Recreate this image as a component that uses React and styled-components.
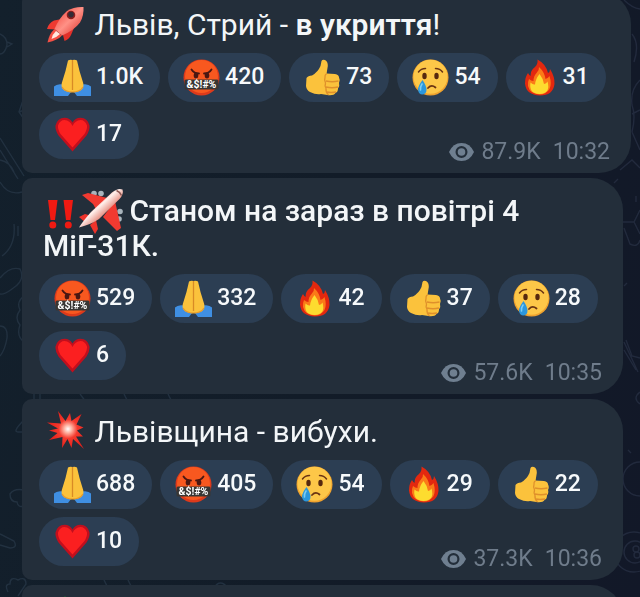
import React from "react";
import styled, { createGlobalStyle } from "styled-components";

const GlobalStyle = createGlobalStyle`
  * {
    box-sizing: border-box;
  }
  body {
    margin: 0;
    background: linear-gradient(100deg, #13202c 0%, #121c28 50%, #121828 100%);
    font-family: Roboto, "Liberation Sans", sans-serif;
  }
`

const Wallpaper = styled.svg`
  position: fixed;
  top: 0;
  ${(props) => (props.$side === "right" ? "right: 0;" : "left: 0;")}
  fill: none;
  stroke: ${(props) => (props.$side === "right" ? "#222a3d" : "#223140")};
  stroke-width: 1.4;
`

const Feed = styled.main`
  position: relative;
  display: flex;
  flex-direction: column;
  gap: 5px;
  height: 100vh;
  overflow: hidden;
  padding-left: 22px;
`

const Bubble = styled.article`
  flex: none;
  margin-right: ${(props) => (props.$wide ? 9 : 17)}px;
  padding: 15px 21px 9px 17px;
  background-color: #232e3a;
  border-radius: 10px 32px 32px 10px;

  /* the feed is scrolled a little past the top of the first post */
  &:first-child {
    margin-top: -8px;
  }
`

const Title = styled.p`
  margin: 0 0 11px;
  padding-left: 4px;
  color: #f3f6f8;
  font-size: 30px;
  line-height: 35px;
  font-weight: ${(props) => (props.$bold ? 500 : 400)};
`

const Strong = styled.strong`
  font-weight: 600;
`

const TitleIcon = styled.svg`
  display: inline-block;
  height: 44px;
  margin: -10px 0;
  vertical-align: -2px;
  overflow: visible;
`

const Reactions = styled.div`
  display: flex;
  flex-wrap: wrap;
  align-items: flex-start;
  gap: 8px;
`

const Reaction = styled.button`
  display: flex;
  align-items: center;
  gap: 5px;
  height: 49px;
  padding: 0 17px 0 15px;
  border: 0;
  border-radius: 25px;
  background-color: #2c3e53;
  color: #f6f9fb;
  font: 500 23px/28px Roboto, "Liberation Sans", sans-serif;
  cursor: pointer;
`

const Count = styled.span`
  padding-bottom: 1px;
`

const Emoji = styled.svg`
  width: 37px;
  height: 37px;
  overflow: visible;
`

const Meta = styled.div`
  display: flex;
  align-items: center;
  gap: 7px;
  margin-left: auto;
  padding-top: 29px;
  color: #6f7c8b;
  font-size: 23px;
  line-height: 25px;
`

const Time = styled.time`
  margin-left: 5px;
`

const Pray = () => (
  <Emoji viewBox="0 0 37 37" aria-hidden="true">
    <path d="M0 27.500Q2 25.500 6 25.200L10 25.500L17 33L14 37H0Z" fill="#3f8fe3" />
    <path d="M37 27.500Q35 25.500 31 25.200L27 25.500L20 33L23 37H37Z" fill="#3f8fe3" />
    <path d="M14 1.500Q16 .2 18.500 1Q21 .2 23 1.500L25.500 12L29.200 24Q30.500 29 26.500 31.500Q22 34 18.500 33Q15 34 10.500 31.500Q6.500 29 7.800 24L11.500 12Z" fill="#fbc23c" />
    <path d="M18.500 1V31" stroke="#d98a25" strokeWidth="1.300" />
    <path d="M8 28Q11 33 18.500 33Q26 33 29 28" fill="none" stroke="#e59a2c" strokeWidth="1.200" />
  </Emoji>
)

const Swear = () => (
  <Emoji viewBox="0 0 37 37" aria-hidden="true">
    <circle cx="18.500" cy="18.500" r="18" fill="#dd3a1b" />
    <circle cx="18.500" cy="17.500" r="16.500" fill="#f8581f" />
    <path d="M8.500 10.500Q11 14.500 16 14.500M28.500 10.500Q26 14.500 21 14.500" fill="none" stroke="#4a1712" strokeWidth="1.800" strokeLinecap="round" />
    <ellipse cx="13" cy="16.500" rx="2.300" ry="2.900" fill="#4a1712" />
    <ellipse cx="24" cy="16.500" rx="2.300" ry="2.900" fill="#4a1712" />
    <rect x="1.500" y="20.500" width="34" height="10" rx="1.500" fill="#383634" />
    <text x="18.500" y="29.300" textAnchor="middle" fill="#fff" fontSize="10.500" fontWeight="700" fontFamily="Roboto, sans-serif">&amp;$!#%</text>
  </Emoji>
)

const Thumb = () => (
  <Emoji viewBox="0 0 37 37" aria-hidden="true">
    <path d="M2.500 19Q4 16.500 8 16.500Q14 13 16.500 7L17.500 2Q18.500 .2 21 1Q24 2.500 23.800 7L22.600 14.500L31 15Q35 15.500 35 18.500Q36.500 21 35 24Q36 27 34 29.500Q34 33 31.500 34Q30 36.500 25 36.200L17 35Q12 36 6 33Q2.500 31 2 27Z" fill="#fbc23c" />
    <path d="M22.600 14.500Q20.500 16 21 18.500Q20 21 21.500 24Q20.500 27 22 29.500Q21.500 33 24.500 36M22 22Q28 23.500 34.500 22M22 28Q28 29.500 34 28M23 33Q27 34 32 33" fill="none" stroke="#df902b" strokeWidth="1.300" />
  </Emoji>
)

const Cry = () => (
  <Emoji viewBox="0 0 37 37" aria-hidden="true">
    <circle cx="18.500" cy="18.500" r="18" fill="#efa22e" />
    <circle cx="18.500" cy="17.800" r="17" fill="#fdc748" />
    <path d="M6.500 13Q9 9.500 13.500 9.500M30.500 13Q28 9.500 23.500 9.500" fill="none" stroke="#6b3413" strokeWidth="1.500" strokeLinecap="round" />
    <ellipse cx="12.500" cy="17" rx="2.200" ry="3.200" fill="#56280e" />
    <ellipse cx="24.500" cy="17" rx="2.200" ry="3.200" fill="#56280e" />
    <path d="M16 29Q19.500 25 23.500 28.500" fill="none" stroke="#6b3413" strokeWidth="1.800" strokeLinecap="round" />
    <path d="M10.500 21Q6 27 6 30.500Q6.500 35.500 10.500 35.500Q14.500 35 14.500 30.500Q14.500 27 10.500 21Z" fill="#2b97dd" />
    <path d="M10 25Q8 28 8.500 31" fill="none" stroke="#7accf5" strokeWidth="1.600" strokeLinecap="round" />
  </Emoji>
)

const Fire = () => (
  <Emoji viewBox="0 0 37 37" aria-hidden="true">
    <path d="M16.500 .5Q25 5 27 14Q29 13 29 10Q34 18 33.500 25Q32 36.500 19 36.500Q5 36 4 24.500Q4 18 7 14Q8 16 9.500 17Q9.500 11 14 8Q17 5 16.500 .5Z" fill="#e3280f" />
    <path d="M18 8Q23.500 13 24.500 20Q27.500 19 28.500 17Q31 25 28.500 30Q25 35.500 18.500 35.500Q9 35 7 27Q6.500 23 8 20Q10 22 12.500 22Q12.500 17 15.500 14Q18.500 11 18 8Z" fill="#fb7a18" />
    <path d="M18.500 15Q22.500 20 23 25Q25.500 24.500 26.500 22.500Q30 34.500 18.500 35Q7.500 34.500 9.500 23.500Q12 26 14 25.500Q14.500 20 18.500 15Z" fill="#fddc2f" />
  </Emoji>
)

const Heart = () => (
  <Emoji viewBox="0 0 37 37" aria-hidden="true">
    <path d="M18.500 35.500L4.500 19.500Q1 14 1.500 9.500Q3.500 2 10.500 1.800Q16 2 18.500 6.500Q21 2 26.500 1.800Q33.500 2 35.500 9.500Q36 14 32.500 19.500Z" fill="#c20f1d" />
    <path d="M18.500 31.500L6.500 18Q3.500 13 4 9.500Q6 4 10.500 4Q16 4.500 18.500 10Q21 4.500 26.500 4Q31 4 33 9.500Q33.500 13 30.500 18Z" fill="#fb1f20" />
  </Emoji>
)

const Rocket = () => (
  <TitleIcon width="44" height="44" viewBox="0 0 44 44" aria-hidden="true">
    <defs>
      <linearGradient id="rocketBody" x1="0" y1="0" x2="1" y2="1">
        <stop offset="0" stopColor="#f0382f" />
        <stop offset=".5" stopColor="#ff9186" />
        <stop offset="1" stopColor="#d92620" />
      </linearGradient>
    </defs>
    <path d="M19 16L11 17.500Q5.500 20 4 26L13 26.500Z" fill="#ee3a31" />
    <path d="M31 25L28 32Q26 36.500 21.500 38L19.500 30Z" fill="#e2302a" />
    <path d="M40.500 4Q41 13 37 19.500Q31 27.500 19 32.500L11.500 26Q16 15 24 8Q31 3.500 40.500 4Z" fill="url(#rocketBody)" />
    <path d="M11.500 26L19 32.500Q15 37 4.500 39.500Q6 31 11.500 26Z" fill="#f45045" />
    <path d="M13 28L17 31Q13 35 8.500 36Q9.500 31 13 28Z" fill="#ffe9e2" />
    <circle cx="28" cy="12" r="4.300" fill="#8c1f1d" />
    <circle cx="28" cy="11.600" r="2.800" fill="#332c36" />
  </TitleIcon>
)

const Marks = () => (
  <TitleIcon width="35" height="44" viewBox="0 0 35 44" aria-hidden="true">
    <path d="M5 11H14.500L12 31H7.500ZM20.500 11H30L27.500 31H23Z" fill="#f01a12" />
    <circle cx="9.800" cy="36" r="3.500" fill="#f01a12" />
    <circle cx="25.300" cy="36" r="3.500" fill="#f01a12" />
  </TitleIcon>
)

const Plane = () => (
  <TitleIcon width="44" height="44" viewBox="0 0 44 44" aria-hidden="true">
    <defs>
      <linearGradient id="planeBody" gradientUnits="userSpaceOnUse" x1="19" y1="13" x2="28" y2="23">
        <stop offset="0" stopColor="#f7a79b" />
        <stop offset=".35" stopColor="#fff0ec" />
        <stop offset="1" stopColor="#e8968a" />
      </linearGradient>
    </defs>
    <g fill="#a9b4bc">
      <circle cx="16" cy="4.500" r="2.800" />
      <circle cx="23" cy="4.500" r="2.800" />
      <circle cx="42" cy="22.500" r="2.800" />
      <circle cx="41" cy="30" r="2.800" />
    </g>
    <path d="M4 6L10 4L33 10L19 22L15 15Z" fill="#f13a31" />
    <path d="M37 12L43 39L39 42L25 28Z" fill="#f13a31" />
    <path d="M1 28L7 25L14 27L8 34Z" fill="#ee332b" />
    <path d="M12 36L18 31L20 40L17 45Z" fill="#ee332b" />
    <path d="M44.500 .500Q46 5 41.500 10L21 30Q13 35.500 1 38.500Q5 32 13 23L34 3.500Q40-1.500 44.500 .500Z" fill="url(#planeBody)" />
    <path d="M38.500 1.500Q42 3 43.500 6.500" fill="none" stroke="#8d5550" strokeWidth="1.500" />
  </TitleIcon>
)

const Burst = () => (
  <TitleIcon width="44" height="44" viewBox="0 0 44 44" aria-hidden="true">
    <defs>
      <radialGradient id="burst" cx="25" cy="19" r="19" gradientUnits="userSpaceOnUse">
        <stop offset="0" stopColor="#fff" />
        <stop offset=".2" stopColor="#ffb5a4" />
        <stop offset=".5" stopColor="#f5392d" />
        <stop offset="1" stopColor="#e4211b" />
      </radialGradient>
    </defs>
    <path d="M15 1L22.500 11L27 3L28.500 11L38.500 4L33.500 14.500L40.500 17.500L34 20.500L40 26.500L33 26.500L41 39L30 29L28.500 38L24.500 29L19 38L19.500 27L6 30L14.500 23L6 20.500L15 18.500L4 12.500L18 13.500Z" fill="url(#burst)" />
  </TitleIcon>
)

const Herb = () => (
  <TitleIcon width="44" height="44" viewBox="0 0 44 44" aria-hidden="true">
    <path d="M22 0L28 9L22 40L16 9Z" fill="#1f7a2b" />
  </TitleIcon>
)

const Eye = () => (
  <svg width="25" height="18" viewBox="0 0 25 18" aria-hidden="true">
    <path d="M12.500 0Q21 0 25 9Q21 18 12.500 18Q4 18 0 9Q4 0 12.500 0Z" fill="#6f7f90" />
    <circle cx="12.500" cy="9" r="4.900" fill="none" stroke="#232e3a" strokeWidth="2.200" />
  </svg>
)

const icons = { pray: Pray, swear: Swear, thumb: Thumb, cry: Cry, fire: Fire, heart: Heart }

const labels = { pray: "🙏", swear: "🤬", thumb: "👍", cry: "😢", fire: "🔥", heart: "❤" }

const posts = [
  {
    title: <Title><Rocket /> Львів, Стрий - <Strong>в укриття</Strong>!</Title>,
    wide: true,
    reactions: [["pray", "1.0K"], ["swear", "420"], ["thumb", "73"], ["cry", "54"], ["fire", "31"], ["heart", "17"]],
    views: "87.9K",
    time: "10:32",
  },
  {
    title: <Title $bold><Marks /><Plane /> Станом на зараз в повітрі 4 МіГ-31К.</Title>,
    reactions: [["swear", "529"], ["pray", "332"], ["fire", "42"], ["thumb", "37"], ["cry", "28"], ["heart", "6"]],
    views: "57.6K",
    time: "10:35",
  },
  {
    title: <Title><Burst /> Львівщина - вибухи.</Title>,
    reactions: [["pray", "688"], ["swear", "405"], ["cry", "54"], ["fire", "29"], ["thumb", "22"], ["heart", "10"]],
    views: "37.3K",
    time: "10:36",
  },
]

const Post = ({ post }) => (
  <Bubble $wide={post.wide}>
    {post.title}
    <Reactions>
      {post.reactions.map(([name, count]) => {
        const Icon = icons[name]
        return (
          <Reaction key={name} type="button" aria-label={labels[name] + " " + count}>
            <Icon />
            <Count>{count}</Count>
          </Reaction>
        )
      })}
      <Meta>
        <Eye />
        <span>{post.views}</span>
        <Time>{post.time}</Time>
      </Meta>
    </Reactions>
  </Bubble>
)

const App = () => (
  <>
    <GlobalStyle />
    <Wallpaper width="300" height="597" aria-hidden="true">
      <path d="M0 34Q7 37 7 45Q5 54 0 54M7 42L12 44L7 47" />
      <path d="M30 80L19 112L26 122M19 112L30 108M0 138L24 176M0 150L18 179M0 160Q10 162 14 172M0 182Q8 196 22 192L30 184" />
      <path d="M14 224Q16 246 2 256M18 226V236M0 278Q10 266 20 269Q26 280 12 289Q4 295 0 294M24 296Q16 302 20 310Q14 318 20 325Q16 336 24 342" />
      <path d="M0 326Q8 326 7 338Q5 350 0 356M24 420Q12 432 18 432H24M24 490Q14 488 10 494Q10 502 17 502Q18 508 24 506M0 534L14 541Q18 548 10 548L0 545" />
      <path d="M8 592Q4 584 10 584Q10 576 18 580Q26 576 26 584L18 596M34 394V402M40 394V402M80 394L86 402M124 394L128 402M168 394L172 402M104 580L108 588M128 580L132 588M214 588Q220 578 228 588" />
    </Wallpaper>
    <Wallpaper $side="right" width="50" height="597" aria-hidden="true">
      <path d="M34 0Q42 8 50 9M42 34Q50 44 44 62M50 80Q40 90 42 105Q46 116 42 132M42 114L50 110M42 132L50 150M30 170L42 160L50 168M24 183L28 179M46 196V202" />
      <path d="M33 222L44 222L50 210M44 222L50 234M34 228L40 244Q48 248 50 240M34 286L37 283M34 342L48 372M34 350L46 370M36 340L42 356L50 358M50 392Q42 398 50 404M38 450L41 453" />
      <circle cx="50" cy="479" r="17" />
      <circle cx="44" cy="552" r="20" />
      <circle cx="45" cy="552" r="11" />
      <circle cx="46" cy="549" r="3" />
      <circle cx="47" cy="555" r="3" />
    </Wallpaper>
    <Feed>
      {posts.map((post) => (
        <Post key={post.time} post={post} />
      ))}
      <Bubble>
        <Title><Herb /></Title>
      </Bubble>
    </Feed>
  </>
)

export default App
